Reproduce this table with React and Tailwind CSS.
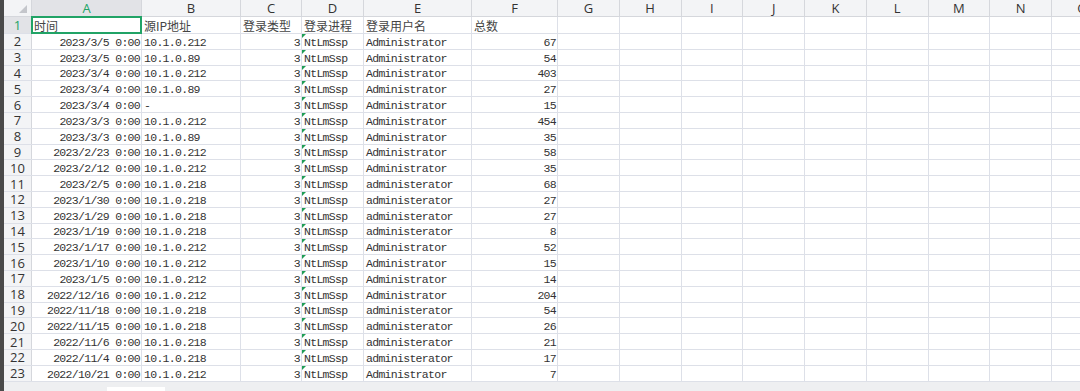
const cols = [
  { key: "A", w: "w-[110px]" },
  { key: "B", w: "w-[99px]" },
  { key: "C", w: "w-[61px]" },
  { key: "D", w: "w-[62px]" },
  { key: "E", w: "w-[108px]" },
  { key: "F", w: "w-[86px]" },
  { key: "G", w: "w-[61.75px]" },
  { key: "H", w: "w-[61.75px]" },
  { key: "I", w: "w-[61.75px]" },
  { key: "J", w: "w-[61.75px]" },
  { key: "K", w: "w-[61.75px]" },
  { key: "L", w: "w-[61.75px]" },
  { key: "M", w: "w-[61.75px]" },
  { key: "N", w: "w-[61.75px]" },
  { key: "O", w: "w-[61.75px]" },
];

const headers = ["时间", "源IP地址", "登录类型", "登录进程", "登录用户名", "总数"];

const rows = [
  ["2023/3/5 0:00", "10.1.0.212", "Administrator", 67],
  ["2023/3/5 0:00", "10.1.0.89", "Administrator", 54],
  ["2023/3/4 0:00", "10.1.0.212", "Administrator", 403],
  ["2023/3/4 0:00", "10.1.0.89", "Administrator", 27],
  ["2023/3/4 0:00", "-", "Administrator", 15],
  ["2023/3/3 0:00", "10.1.0.212", "Administrator", 454],
  ["2023/3/3 0:00", "10.1.0.89", "Administrator", 35],
  ["2023/2/23 0:00", "10.1.0.212", "Administrator", 58],
  ["2023/2/12 0:00", "10.1.0.212", "Administrator", 35],
  ["2023/2/5 0:00", "10.1.0.218", "administerator", 68],
  ["2023/1/30 0:00", "10.1.0.218", "administerator", 27],
  ["2023/1/29 0:00", "10.1.0.218", "administerator", 27],
  ["2023/1/19 0:00", "10.1.0.218", "administerator", 8],
  ["2023/1/17 0:00", "10.1.0.212", "Administrator", 52],
  ["2023/1/10 0:00", "10.1.0.212", "Administrator", 15],
  ["2023/1/5 0:00", "10.1.0.212", "Administrator", 14],
  ["2022/12/16 0:00", "10.1.0.212", "Administrator", 204],
  ["2022/11/18 0:00", "10.1.0.218", "administerator", 54],
  ["2022/11/15 0:00", "10.1.0.218", "administerator", 26],
  ["2022/11/6 0:00", "10.1.0.218", "administerator", 21],
  ["2022/11/4 0:00", "10.1.0.218", "administerator", 17],
  ["2022/10/21 0:00", "10.1.0.212", "Administrator", 7],
];

const mono = "font-['Liberation_Mono',monospace] text-[11.5px] tracking-[-0.7px] leading-[13px] text-[#333]";
const cjk = "font-['Noto_Sans_CJK_SC',sans-serif] text-[12px] leading-[15px] text-[#444]";

function Cell({ w, align = "left", children, className = "" }) {
  return (
    <div
      className={`relative ${w} shrink-0 h-full border-r border-[#dde0e8] flex items-end overflow-visible whitespace-nowrap ${
        align === "right" ? "justify-end pr-[1px]" : "justify-start pl-[2px]"
      } ${className}`}
    >
      {children}
    </div>
  );
}

function RowHead({ n, active }) {
  return (
    <div
      className={`w-[28px] shrink-0 h-full flex items-center justify-center border-r border-[#d5d7dc] font-['Open_Sans',sans-serif] text-[13px] leading-[12px] ${
        active ? "bg-[#e2e3e7] text-[#21a366]" : "bg-[#f3f4f6] text-[#333]"
      }`}
    >
      {n}
    </div>
  );
}

export default function App() {
  return (
    <div className="flex w-[1080px] h-[391px] overflow-hidden bg-white">
      <div className="w-[4px] shrink-0 bg-[#4a4a4a]" />
      <div className="flex-1 flex flex-col overflow-hidden">
        {/* column letters */}
        <div className="flex h-[17px] shrink-0 border-b border-[#d5d7dc] bg-[#f3f4f6]">
          <div className="relative w-[28px] shrink-0 h-full border-r border-[#d5d7dc]">
            <div className="absolute right-[4px] bottom-[3px] w-0 h-0 border-l-[8px] border-l-transparent border-b-[8px] border-b-[#c4c6cb]" />
          </div>
          {cols.map((c) => (
            <div
              key={c.key}
              className={`${c.w} shrink-0 h-full flex items-center justify-center border-r border-[#d5d7dc] font-['Open_Sans',sans-serif] text-[13px] leading-[15px] ${
                c.key === "A" ? "bg-[#e2e3e7] text-[#21a366]" : "text-[#333]"
              }`}
            >
              {c.key}
            </div>
          ))}
        </div>

        {/* row 1 */}
        <div className="flex h-[17px] shrink-0 border-b border-[#dde0e8]">
          <RowHead n={1} active />
          {cols.map((c, i) => (
            <Cell key={c.key} w={c.w} className={cjk}>
              {i === 0 && (
                <div className="absolute -left-px -top-px -right-px -bottom-px border-2 border-[#21a366] z-10" />
              )}
              {headers[i] ?? ""}
            </Cell>
          ))}
        </div>

        {rows.map((r, idx) => (
          <div key={idx} className="flex h-[15.8px] shrink-0 border-b border-[#dde0e8]">
            <RowHead n={idx + 2} />
            <Cell w={cols[0].w} align="right" className={mono}>{r[0]}</Cell>
            <Cell w={cols[1].w} className={mono}>{r[1]}</Cell>
            <Cell w={cols[2].w} align="right" className={mono}>3</Cell>
            <Cell w={cols[3].w} className={mono}>
              <div className="absolute left-0 top-0 w-0 h-0 border-t-[4px] border-t-[#1f9d55] border-r-[4px] border-r-transparent" />
              NtLmSsp
            </Cell>
            <Cell w={cols[4].w} className={mono}>{r[2]}</Cell>
            <Cell w={cols[5].w} align="right" className={mono}>{r[3]}</Cell>
            {cols.slice(6).map((c) => (
              <Cell key={c.key} w={c.w} />
            ))}
          </div>
        ))}

        {/* sheet bar */}
        <div className="flex-1 flex bg-[#eeeff1]">
          <div className="w-[103px] shrink-0" />
          <div className="w-[58px] shrink-0 bg-white mt-[5px]" />
        </div>
      </div>
    </div>
  );
}
